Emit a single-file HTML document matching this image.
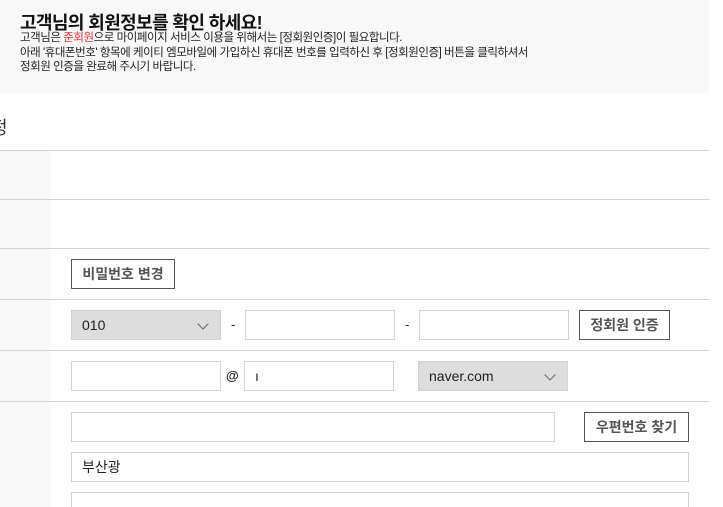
<!DOCTYPE html><html><head><meta charset="utf-8"><style>
*{margin:0;padding:0;box-sizing:border-box}
html,body{width:723px;height:507px;overflow:hidden}
body{background:#fff;font-family:"Liberation Sans","Noto Sans CJK KR",sans-serif;color:#222;position:relative}
.a{position:absolute}
.ban{left:0;top:0;width:709px;height:93px;background:#f8f8f8}
.line{left:0;width:709px;height:1px;background:#d6d6d6}
.inp{position:absolute;border:1px solid #d4d4d4;background:#fff;font-size:14px;padding-left:10px;display:flex;align-items:center}
.sel{position:absolute;background:#ddd;border:1px solid #d4d4d4;font-size:14px;padding-left:10px;display:flex;align-items:center}
.sel:after{content:"";position:absolute;right:13px;top:9px;width:7px;height:7px;border-right:1px solid #666;border-bottom:1px solid #666;transform:rotate(45deg)}
.btn{position:absolute;border:1px solid #555;background:#fff;font-size:14px;font-weight:bold;display:flex;align-items:center;justify-content:center;color:#555}
</style></head><body>
<div class="a ban"></div>
<div class="a" style="left:20px;top:9px;font-size:18px;font-weight:bold;color:#111;letter-spacing:-0.6px">고객님의 회원정보를 확인 하세요!</div>
<div class="a" style="left:20px;top:31px;font-size:11.5px;line-height:14.5px;color:#222;letter-spacing:-0.45px;white-space:nowrap">고객님은 <span style="color:#e33">준회원</span>으로 마이페이지 서비스 이용을 위해서는 [정회원인증]이 필요합니다.<br>아래 '휴대폰번호' 항목에 케이티 엠모바일에 가입하신 휴대폰 번호를 입력하신 후 [정회원인증] 버튼을 클릭하셔서<br>정회원 인증을 완료해 주시기 바랍니다.</div>
<div class="a" style="left:-9px;top:114px;font-size:18px;color:#333">정</div>
<div class="a" style="left:0;top:150px;width:51px;height:357px;background:#f8f8f8"></div>
<div class="a line" style="top:150px"></div>
<div class="a line" style="top:199px"></div>
<div class="a line" style="top:248px"></div>
<div class="a line" style="top:299px"></div>
<div class="a line" style="top:350px"></div>
<div class="a line" style="top:401px"></div>
<div class="btn" style="left:71px;top:259px;width:104px;height:30px">비밀번호 변경</div>
<div class="sel" style="left:71px;top:310px;width:150px;height:30px">010</div>
<div class="a" style="left:231px;top:317px;font-size:13px">-</div>
<div class="inp" style="left:245px;top:310px;width:150px;height:30px"></div>
<div class="a" style="left:405px;top:317px;font-size:13px">-</div>
<div class="inp" style="left:419px;top:310px;width:150px;height:30px"></div>
<div class="btn" style="left:579px;top:310px;width:91px;height:30px">정회원 인증</div>
<div class="inp" style="left:71px;top:361px;width:150px;height:30px"></div>
<div class="a" style="left:226px;top:368px;font-size:13px;font-weight:bold">@</div>
<div class="inp" style="left:244px;top:361px;width:150px;height:30px">ı</div>
<div class="sel" style="left:418px;top:361px;width:150px;height:30px">naver.com</div>
<div class="inp" style="left:71px;top:412px;width:484px;height:30px"></div>
<div class="btn" style="left:584px;top:412px;width:105px;height:30px">우편번호 찾기</div>
<div class="inp" style="left:71px;top:452px;width:618px;height:30px">부산광</div>
<div class="inp" style="left:71px;top:492px;width:618px;height:30px"></div>
</body></html>
